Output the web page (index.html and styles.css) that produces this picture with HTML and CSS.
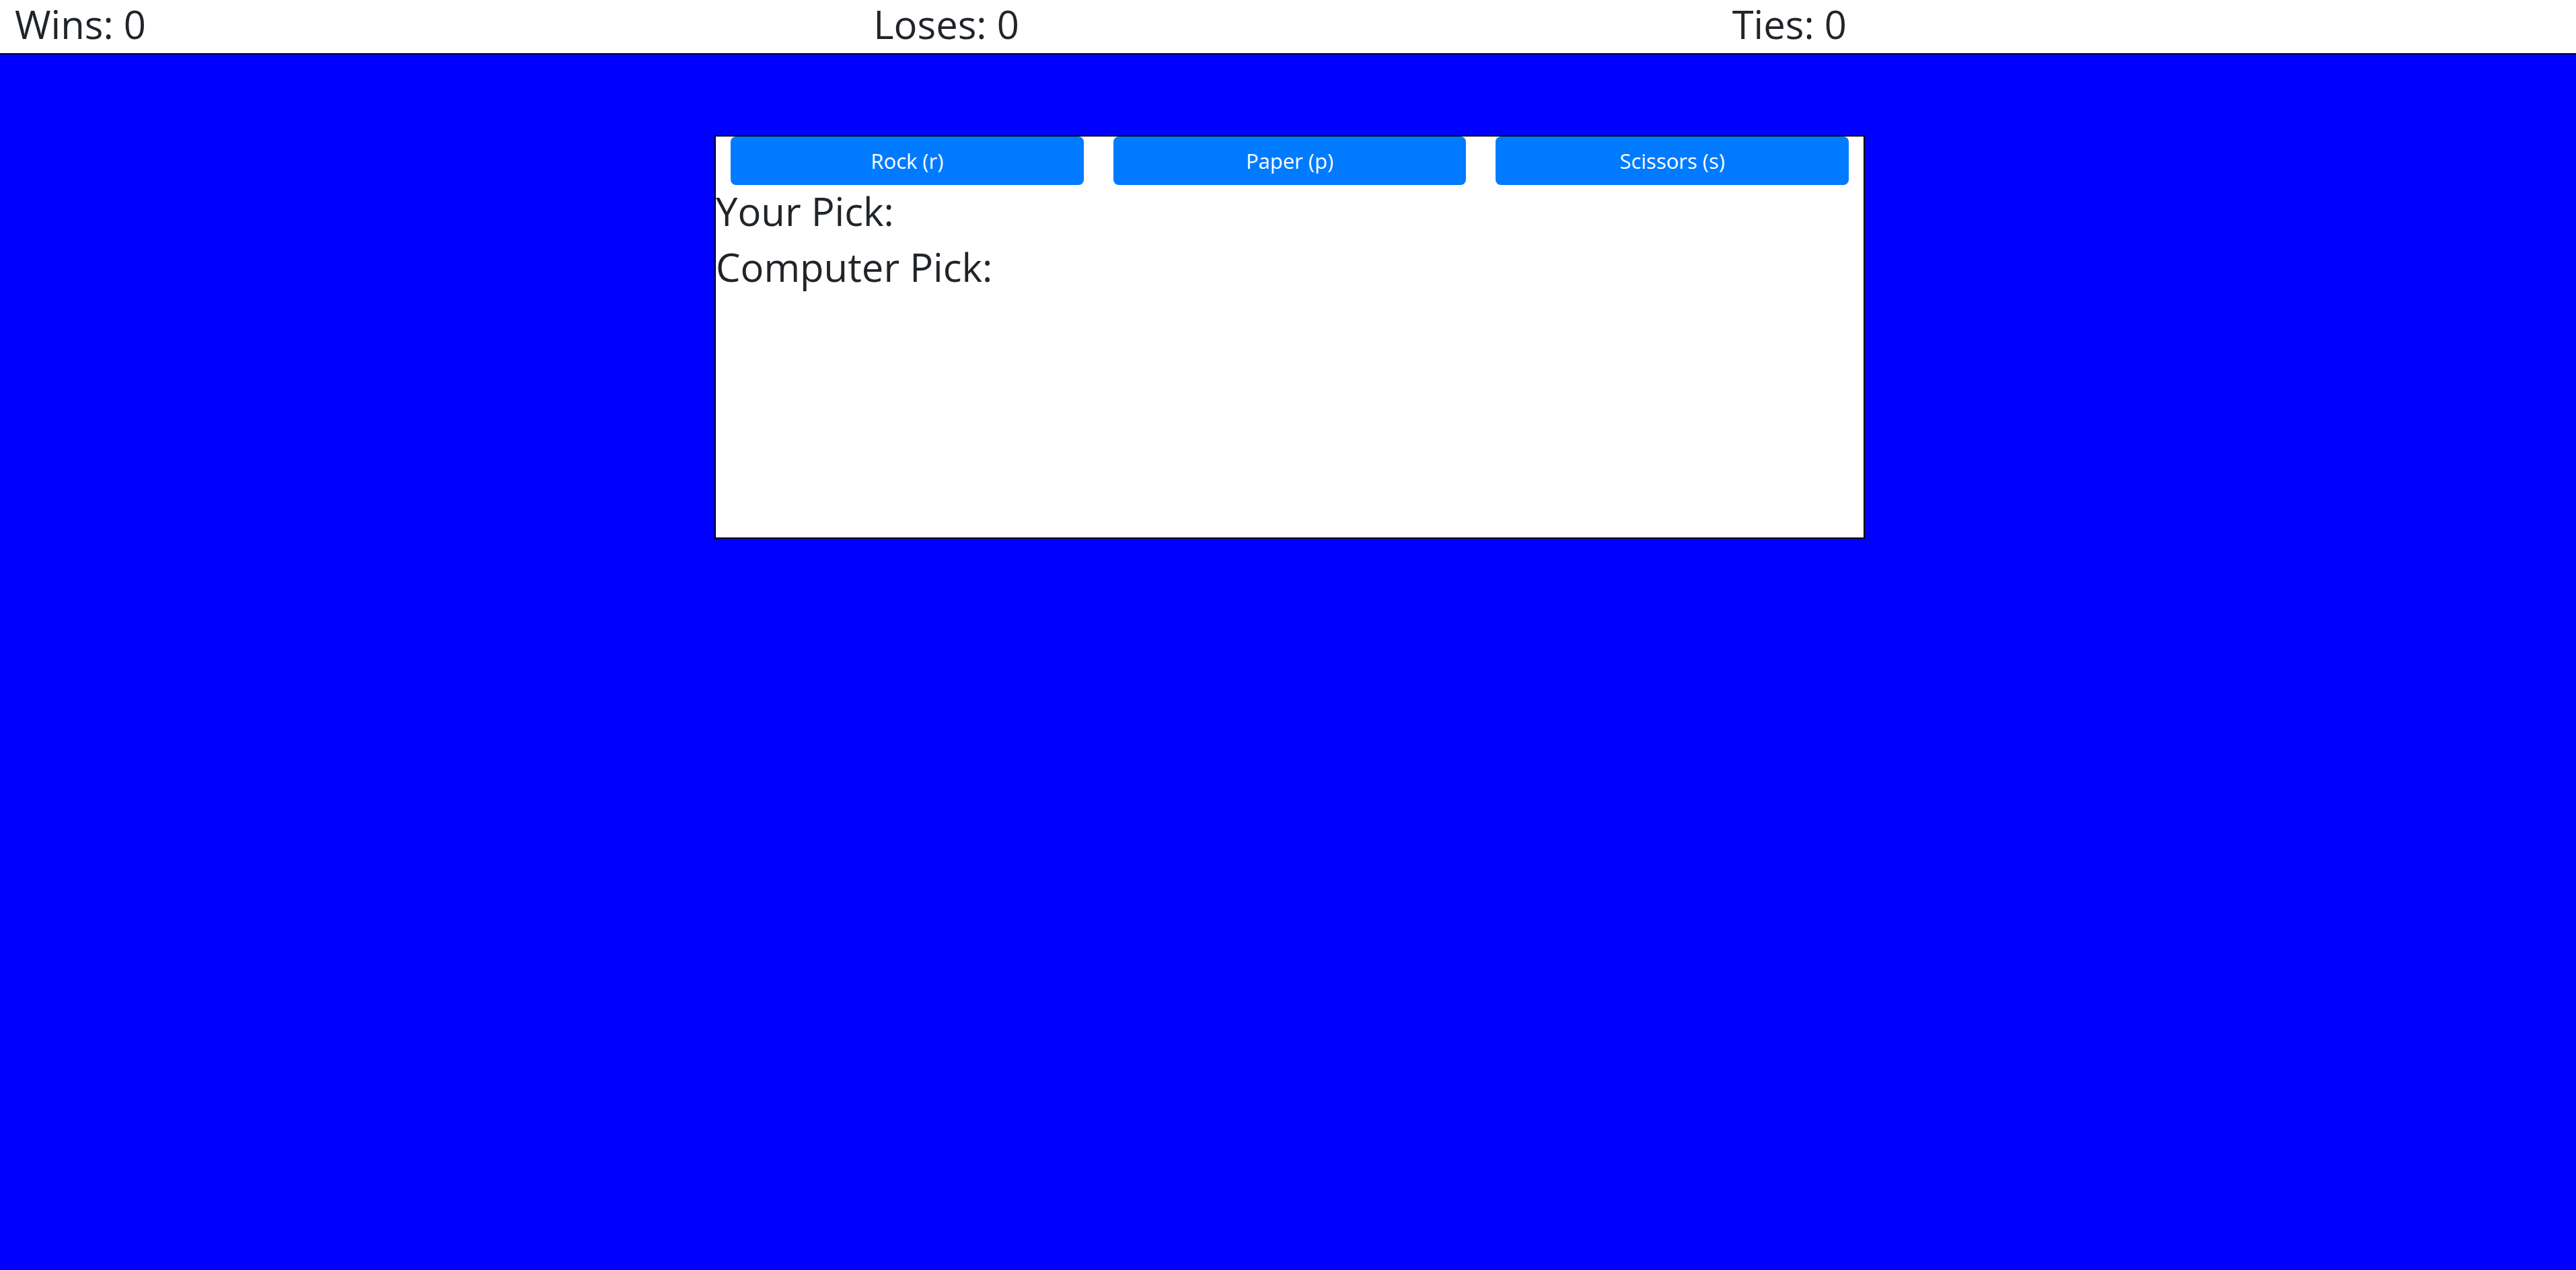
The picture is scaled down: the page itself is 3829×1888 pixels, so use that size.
FILE: index.html
```html
<!DOCTYPE html>
<html lang="en">
<head>
<meta charset="utf-8">
<title>Rock Paper Scissors</title>
<link rel="stylesheet" href="styles.css">
</head>
<body>
<header class="scoreboard">
  <div class="score">Wins: 0</div>
  <div class="score">Loses: 0</div>
  <div class="score">Ties: 0</div>
</header>
<main class="stage">
  <section class="game-card">
    <div class="choices">
      <div class="choice-col"><button class="btn-choice" type="button">Rock (r)</button></div>
      <div class="choice-col"><button class="btn-choice" type="button">Paper (p)</button></div>
      <div class="choice-col"><button class="btn-choice" type="button">Scissors (s)</button></div>
    </div>
    <div class="pick">Your Pick:</div>
    <div class="pick">Computer Pick:</div>
  </section>
</main>
</body>
</html>
```
FILE: styles.css
```css
* { box-sizing: border-box; }
html, body {
  margin: 0;
  padding: 0;
}
body {
  background: #0000ff;
  font-family: "Open Sans", "Noto Sans", sans-serif;
  color: #212529;
  min-height: 1888px;
}
.scoreboard {
  display: grid;
  grid-template-columns: repeat(3, 1fr);
  height: 81px;
  background: #ffffff;
  border-bottom: 2px solid #000000;
}
.score {
  padding-left: 22px;
  font-size: 58px;
  font-weight: 500;
  line-height: 72px;
}
.stage {
  display: flex;
  justify-content: center;
  padding: 120px 0 0 5px;
}
.game-card {
  width: 1710px;
  height: 600px;
  background: #ffffff;
  border: 2px solid #000000;
}
.choices {
  display: grid;
  grid-template-columns: repeat(3, 1fr);
}
.choice-col {
  padding: 0 22px;
}
.btn-choice {
  display: block;
  width: 100%;
  height: 72px;
  margin: 0;
  border: none;
  border-radius: 8px;
  background: #007bff;
  color: #ffffff;
  font-family: "Open Sans", "Noto Sans", sans-serif;
  font-size: 31px;
  line-height: 72px;
  padding: 0;
}
.pick {
  font-size: 58px;
  font-weight: 500;
  line-height: 77px;
  margin-bottom: 6px;
}
```
